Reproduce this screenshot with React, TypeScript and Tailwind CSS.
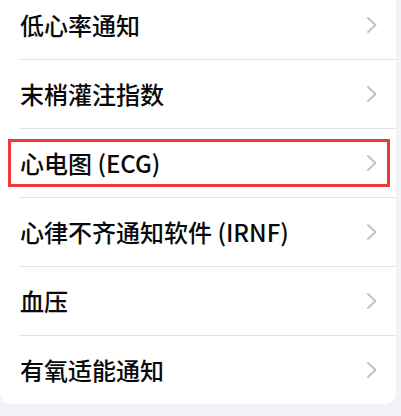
const items = ["低心率通知", "末梢灌注指数", "心电图 (ECG)", "心律不齐通知软件 (IRNF)", "血压", "有氧适能通知"];

function Chevron() {
  return (
    <svg width="12" height="18" viewBox="0 0 12 18" fill="none">
      <polyline points="2,2 9.5,9 2,16" stroke="#c2c2c4" strokeWidth="2" strokeLinecap="round" strokeLinejoin="round" />
    </svg>
  );
}

export default function App() {
  return (
    <div className="w-[401px] h-[416px] overflow-hidden bg-[#f2f2f6] font-['Noto_Sans_CJK_SC',sans-serif]">
      <div className="w-[396px] -mt-[9px] bg-white rounded-b-[10px]">
        {items.map((label, i) => (
          <div key={label}>
            <div className="relative h-[68px] flex items-center pl-[20px] pr-[18px]">
              <span className="flex-1 text-[24px] font-medium text-[#0a0a0a] leading-none">{label}</span>
              <Chevron />
              {i === 2 && (
                <div className="absolute left-[8px] right-[6px] top-[10px] h-[48px] border-[3px] border-[#f03838]" />
              )}
            </div>
            {i < items.length - 1 && <div className="ml-[19px] h-px bg-[#e4e4e6]" />}
          </div>
        ))}
      </div>
    </div>
  );
}
